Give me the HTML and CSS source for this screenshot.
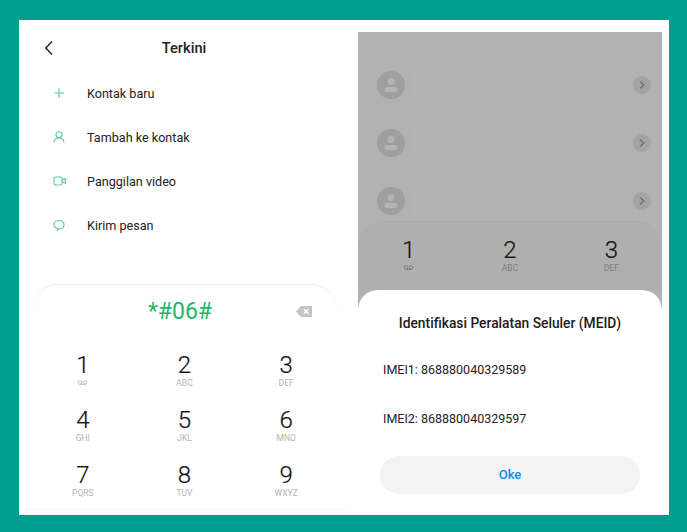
FILE: index.html
```html
<!DOCTYPE html>
<html>

    <head>
        <meta charset="utf-8">
        <title>Terkini</title>
        <link rel="stylesheet" href="styles.css">
    </head>

    <body>
        <div class="card">

            <!-- left phone -->
            <div class="screen">
                <div class="top-bar">
                    <svg class="back" width="10" height="16" viewBox="0 0 10 16"><path d="M8 1.5 L1.8 8 L8 14.5" /></svg>
                    <span class="top-title">Terkini</span>
                </div>

                <div class="menu">
                    <div class="menu-row">
                        <svg class="menu-icon" width="14" height="14" viewBox="0 0 14 14"><path d="M7 2 V12 M2 7 H12" /></svg>
                        <span>Kontak baru</span>
                    </div>
                    <div class="menu-row">
                        <svg class="menu-icon" width="14" height="14" viewBox="0 0 14 14"><circle cx="7" cy="4.8" r="3" /><path d="M2 12.5 C2.3 9.6 4.4 8 7 8 C9.6 8 11.7 9.6 12 12.5" /></svg>
                        <span>Tambah ke kontak</span>
                    </div>
                    <div class="menu-row">
                        <svg class="menu-icon" width="14" height="14" viewBox="0 0 14 14"><rect x="2" y="3" width="8" height="8" rx="1.5" /><path d="M10 6 L13.5 4.8 V9.2 L10 8" /></svg>
                        <span>Panggilan video</span>
                    </div>
                    <div class="menu-row">
                        <svg class="menu-icon" width="14" height="14" viewBox="0 0 14 14"><path d="M7 2.5 C10 2.5 12 4.3 12 6.7 C12 9.1 10 10.8 7.4 10.8 L5.6 12.2 V10.5 C3.4 10 2 8.6 2 6.7 C2 4.3 4 2.5 7 2.5 Z" /></svg>
                        <span>Kirim pesan</span>
                    </div>
                </div>

                <div class="keypad">
                    <div class="dial-row">
                        <span class="dial-number">*#06#</span>
                        <svg class="backspace" width="16" height="11" viewBox="0 0 16 11"><path d="M5 0 H16 V11 H5 L0 5.5 Z" fill="#c4c4c4" /><path d="M8 3.2 L12.4 7.8 M12.4 3.2 L8 7.8" stroke="#fff" stroke-width="1.5" /></svg>
                    </div>
                    <div class="keys">
                        <div class="key"><div class="digit">1</div><div class="letters"><svg class="voicemail" width="11" height="5" viewBox="0 0 12 6"><circle cx="3" cy="3" r="2.2" /><circle cx="9" cy="3" r="2.2" /><path d="M3 5.2 H9" /></svg></div></div>
                        <div class="key"><div class="digit">2</div><div class="letters">ABC</div></div>
                        <div class="key"><div class="digit">3</div><div class="letters">DEF</div></div>
                        <div class="key"><div class="digit">4</div><div class="letters">GHI</div></div>
                        <div class="key"><div class="digit">5</div><div class="letters">JKL</div></div>
                        <div class="key"><div class="digit">6</div><div class="letters">MNO</div></div>
                        <div class="key"><div class="digit">7</div><div class="letters">PQRS</div></div>
                        <div class="key"><div class="digit">8</div><div class="letters">TUV</div></div>
                        <div class="key"><div class="digit">9</div><div class="letters">WXYZ</div></div>
                    </div>
                </div>
            </div>

            <!-- right phone, dimmed behind the dialog -->
            <div class="screen-dim">
                <div class="recent-list">
                    <div class="recent-row">
                        <svg class="avatar" width="28" height="28" viewBox="0 0 28 28"><circle cx="14" cy="14" r="14" fill="#9f9f9f" /><circle cx="14" cy="10.5" r="3.5" fill="#b4b4b4" /><rect x="7.5" y="16" width="13" height="5" rx="2.5" fill="#b4b4b4" /></svg>
                        <span class="recent-line"></span>
                        <svg class="chevron" width="18" height="18" viewBox="0 0 18 18"><circle cx="9" cy="9" r="9" fill="#a3a3a3" /><path d="M7.2 5.6 L10.8 9 L7.2 12.4" /></svg>
                    </div>
                    <div class="recent-row">
                        <svg class="avatar" width="28" height="28" viewBox="0 0 28 28"><circle cx="14" cy="14" r="14" fill="#9f9f9f" /><circle cx="14" cy="10.5" r="3.5" fill="#b4b4b4" /><rect x="7.5" y="16" width="13" height="5" rx="2.5" fill="#b4b4b4" /></svg>
                        <span class="recent-line"></span>
                        <svg class="chevron" width="18" height="18" viewBox="0 0 18 18"><circle cx="9" cy="9" r="9" fill="#a3a3a3" /><path d="M7.2 5.6 L10.8 9 L7.2 12.4" /></svg>
                    </div>
                    <div class="recent-row">
                        <svg class="avatar" width="28" height="28" viewBox="0 0 28 28"><circle cx="14" cy="14" r="14" fill="#9f9f9f" /><circle cx="14" cy="10.5" r="3.5" fill="#b4b4b4" /><rect x="7.5" y="16" width="13" height="5" rx="2.5" fill="#b4b4b4" /></svg>
                        <span class="recent-line"></span>
                        <svg class="chevron" width="18" height="18" viewBox="0 0 18 18"><circle cx="9" cy="9" r="9" fill="#a3a3a3" /><path d="M7.2 5.6 L10.8 9 L7.2 12.4" /></svg>
                    </div>
                </div>

                <div class="keypad keypad-dim">
                    <div class="keys">
                        <div class="key"><div class="digit">1</div><div class="letters"><svg class="voicemail" width="11" height="5" viewBox="0 0 12 6"><circle cx="3" cy="3" r="2.2" /><circle cx="9" cy="3" r="2.2" /><path d="M3 5.2 H9" /></svg></div></div>
                        <div class="key"><div class="digit">2</div><div class="letters">ABC</div></div>
                        <div class="key"><div class="digit">3</div><div class="letters">DEF</div></div>
                    </div>
                </div>

                <div class="dialog">
                    <div class="dialog-title">Identifikasi Peralatan Seluler (MEID)</div>
                    <div class="imei">IMEI1: 868880040329589</div>
                    <div class="imei">IMEI2: 868880040329597</div>
                    <div class="ok-button">Oke</div>
                </div>
            </div>

        </div>
    </body>

</html>
```

FILE: styles.css
```css
html, body {
    margin: 0;
    padding: 0;
}

body {
    width: 687px;
    height: 532px;
    overflow: hidden;
    box-sizing: border-box;
    padding: 20px 18px 17px 19px;
    background-color: #009e8f;
    font-family: Roboto, "Liberation Sans", sans-serif;
    color: #222;
}

.card {
    display: flex;
    height: 495px;
    box-sizing: border-box;
    padding: 12px 7px 5px 0;
    background-color: white;
}

.screen {
    width: 326px;
    margin-right: 13px;
    display: flex;
    flex-direction: column;
    border-bottom: 1px solid #f4f4f4;
    box-sizing: border-box;
}

.top-bar {
    height: 32px;
    display: flex;
    align-items: center;
    justify-content: center;
    position: relative;
}

.top-title {
    margin-left: 4px;
    font-size: 14.7px;
    font-weight: 500;
}

.back {
    position: absolute;
    left: 25px;
    top: 8px;
}

.back path {
    fill: none;
    stroke: #222;
    stroke-width: 1.5;
}

.menu {
    margin-top: 7px;
    display: flex;
    flex-direction: column;
}

.menu-row {
    height: 44px;
    padding-left: 33px;
    display: flex;
    align-items: center;
    font-size: 12.6px;
}

.menu-icon {
    margin-right: 21px;
    fill: none;
    stroke: #5ccb9e;
    stroke-width: 1.1;
}

.keypad {
    height: 225px;
    box-sizing: border-box;
    margin: auto 8px 0 13px;
    border-top: 1px solid #eeeeee;
    border-radius: 26px 26px 0 0;
}

.dial-row {
    height: 53px;
    padding-right: 9px;
    display: grid;
    grid-template-columns: 1fr auto 1fr;
    align-items: center;
    margin-bottom: 15px;
}

.dial-number {
    grid-column: 2;
    font-size: 23px;
    color: #1db866;
}

.backspace {
    justify-self: end;
    margin-right: 16px;
}

.keys {
    display: grid;
    grid-template-columns: repeat(3, 1fr);
    row-gap: 19px;
}

.key {
    height: 36px;
    text-align: center;
}

.digit {
    font-size: 24px;
    font-weight: 300;
    line-height: 24px;
    color: #111;
    -webkit-text-stroke: 0.2px #111;
}

.letters {
    height: 12px;
    font-size: 8.5px;
    line-height: 12px;
    color: #b3b3b3;
}

.voicemail {
    fill: none;
    stroke: #a6a6a6;
    stroke-width: 0.8;
    vertical-align: top;
    margin-top: 3px;
}

.screen-dim {
    width: 304px;
    position: relative;
    overflow: hidden;
    background-color: #b2b2b2;
}

.recent-list {
    padding-top: 38px;
    display: flex;
    flex-direction: column;
    gap: 28px;
}

.recent-row {
    height: 30px;
    padding: 0 11px 0 19px;
    display: flex;
    align-items: center;
}

.recent-line {
    width: 1px;
    height: 24px;
    margin-left: 9px;
    background-color: #b9b9b9;
}

.chevron {
    margin-left: auto;
}

.chevron path {
    fill: none;
    stroke: #6a6a6a;
    stroke-width: 1.3;
}

.keypad-dim {
    margin: 5px 0 0 0;
    height: 69px;
    padding-top: 16px;
    background-color: #afafaf;
    border-top-color: #ababab;
}

.keypad-dim .letters {
    color: #7d7d7d;
}

.keypad-dim .voicemail {
    stroke: #666;
}

.dialog {
    position: absolute;
    left: 0;
    right: 0;
    top: 258px;
    bottom: 0;
    padding: 0 22px;
    background-color: white;
    border-radius: 20px 20px 0 0;
}

.dialog-title {
    margin-top: 23px;
    font-size: 13.8px;
    font-weight: 500;
    line-height: 20px;
    text-align: center;
    color: #1c1c1c;
}

.imei {
    margin: 24.5px 0 0 3px;
    font-size: 12.5px;
    line-height: 24px;
}

.imei + .imei {
    margin-top: 25px;
}

.ok-button {
    height: 38px;
    margin-top: 25px;
    border-radius: 19px;
    background-color: #f3f3f3;
    color: #0d8fe8;
    font-size: 13px;
    font-weight: 500;
    line-height: 38px;
    text-align: center;
}
```
